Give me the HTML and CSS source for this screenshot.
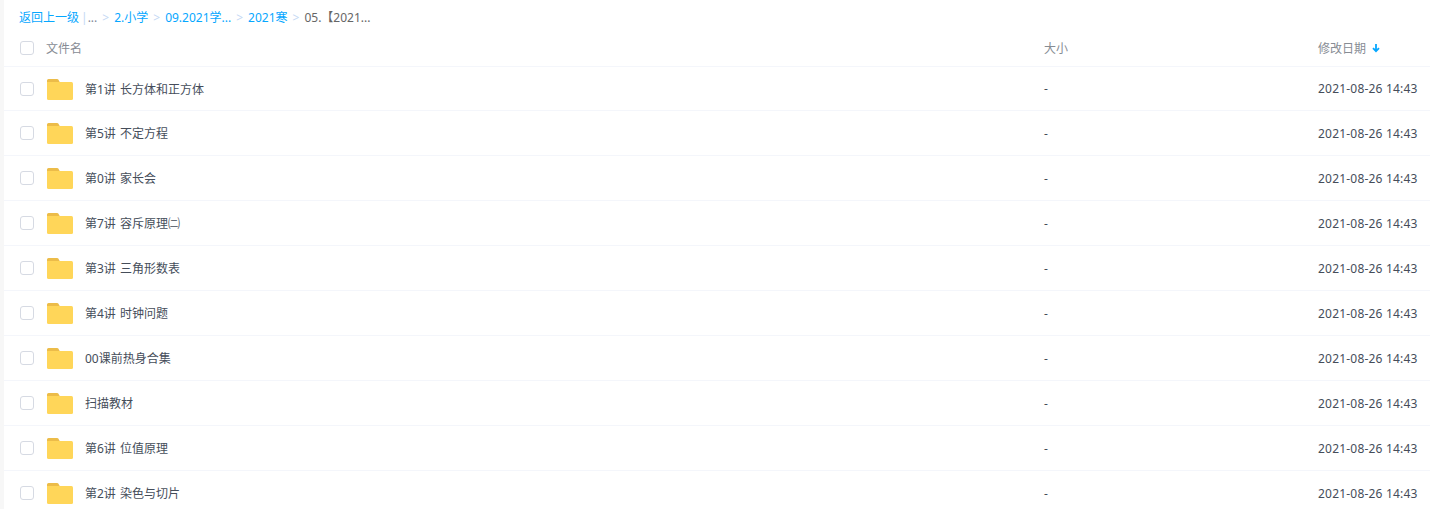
FILE: index.html
```html
<!DOCTYPE html>
<html lang="zh-CN">
<head>
<meta charset="utf-8">
<title>文件列表</title>
<link rel="stylesheet" href="styles.css">
</head>
<body>
<div class="page">
  <nav class="crumbs">
    <a>返回上一级</a><span class="bar">|</span><a class="dots">...</a>
    <span class="sep">&gt;</span><a>2.小学</a>
    <span class="sep">&gt;</span><a>09.2021学...</a>
    <span class="sep">&gt;</span><a>2021寒</a>
    <span class="sep">&gt;</span><span class="current">05.【2021...</span>
  </nav>
  <div class="row head">
    <span class="check"></span>
    <span class="name">文件名</span>
    <span class="size">大小</span>
    <span class="date">修改日期<svg class="arrow" width="10" height="10" viewBox="0 0 10 10"><path d="M5 1v7M2 5.2 5 8.2 8 5.2" fill="none" stroke="#06a7ff" stroke-width="1.8"/></svg></span>
  </div>
  <div class="row"><span class="check"></span><svg class="folder" viewBox="0 0 26 21"><path d="M1.5 0h8.7a1.5 1.5 0 0 1 1.1.5L13 3.5H0v-2A1.5 1.5 0 0 1 1.5 0z" fill="#ecbc49"/><path d="M0 3h24.5A1.5 1.5 0 0 1 26 4.500V19.500a1.500 1.500 0 0 1-1.500 1.500H1.500A1.500 1.500 0 0 1 0 19.500z" fill="#ffd659"/></svg><span class="title">第1讲 长方体和正方体</span><span class="size">-</span><span class="date stamp">2021-08-26 14:43</span></div>
  <div class="row"><span class="check"></span><svg class="folder" viewBox="0 0 26 21"><path d="M1.5 0h8.7a1.5 1.5 0 0 1 1.1.5L13 3.5H0v-2A1.5 1.5 0 0 1 1.5 0z" fill="#ecbc49"/><path d="M0 3h24.5A1.5 1.5 0 0 1 26 4.500V19.500a1.500 1.500 0 0 1-1.500 1.500H1.500A1.500 1.500 0 0 1 0 19.500z" fill="#ffd659"/></svg><span class="title">第5讲 不定方程</span><span class="size">-</span><span class="date stamp">2021-08-26 14:43</span></div>
  <div class="row"><span class="check"></span><svg class="folder" viewBox="0 0 26 21"><path d="M1.5 0h8.7a1.5 1.5 0 0 1 1.1.5L13 3.5H0v-2A1.5 1.5 0 0 1 1.5 0z" fill="#ecbc49"/><path d="M0 3h24.5A1.5 1.5 0 0 1 26 4.500V19.500a1.500 1.500 0 0 1-1.500 1.500H1.500A1.500 1.500 0 0 1 0 19.500z" fill="#ffd659"/></svg><span class="title">第0讲 家长会</span><span class="size">-</span><span class="date stamp">2021-08-26 14:43</span></div>
  <div class="row"><span class="check"></span><svg class="folder" viewBox="0 0 26 21"><path d="M1.5 0h8.7a1.5 1.5 0 0 1 1.1.5L13 3.5H0v-2A1.5 1.5 0 0 1 1.5 0z" fill="#ecbc49"/><path d="M0 3h24.5A1.5 1.5 0 0 1 26 4.500V19.500a1.500 1.500 0 0 1-1.500 1.500H1.500A1.500 1.500 0 0 1 0 19.500z" fill="#ffd659"/></svg><span class="title">第7讲 容斥原理㈡</span><span class="size">-</span><span class="date stamp">2021-08-26 14:43</span></div>
  <div class="row"><span class="check"></span><svg class="folder" viewBox="0 0 26 21"><path d="M1.5 0h8.7a1.5 1.5 0 0 1 1.1.5L13 3.5H0v-2A1.5 1.5 0 0 1 1.5 0z" fill="#ecbc49"/><path d="M0 3h24.5A1.5 1.5 0 0 1 26 4.500V19.500a1.500 1.500 0 0 1-1.500 1.500H1.500A1.500 1.500 0 0 1 0 19.500z" fill="#ffd659"/></svg><span class="title">第3讲 三角形数表</span><span class="size">-</span><span class="date stamp">2021-08-26 14:43</span></div>
  <div class="row"><span class="check"></span><svg class="folder" viewBox="0 0 26 21"><path d="M1.5 0h8.7a1.5 1.5 0 0 1 1.1.5L13 3.5H0v-2A1.5 1.5 0 0 1 1.5 0z" fill="#ecbc49"/><path d="M0 3h24.5A1.5 1.5 0 0 1 26 4.500V19.500a1.500 1.500 0 0 1-1.500 1.500H1.500A1.500 1.500 0 0 1 0 19.500z" fill="#ffd659"/></svg><span class="title">第4讲 时钟问题</span><span class="size">-</span><span class="date stamp">2021-08-26 14:43</span></div>
  <div class="row"><span class="check"></span><svg class="folder" viewBox="0 0 26 21"><path d="M1.5 0h8.7a1.5 1.5 0 0 1 1.1.5L13 3.5H0v-2A1.5 1.5 0 0 1 1.5 0z" fill="#ecbc49"/><path d="M0 3h24.5A1.5 1.5 0 0 1 26 4.500V19.500a1.500 1.500 0 0 1-1.500 1.500H1.500A1.500 1.500 0 0 1 0 19.500z" fill="#ffd659"/></svg><span class="title">00课前热身合集</span><span class="size">-</span><span class="date stamp">2021-08-26 14:43</span></div>
  <div class="row"><span class="check"></span><svg class="folder" viewBox="0 0 26 21"><path d="M1.5 0h8.7a1.5 1.5 0 0 1 1.1.5L13 3.5H0v-2A1.5 1.5 0 0 1 1.5 0z" fill="#ecbc49"/><path d="M0 3h24.5A1.5 1.5 0 0 1 26 4.500V19.500a1.500 1.500 0 0 1-1.500 1.500H1.500A1.500 1.500 0 0 1 0 19.500z" fill="#ffd659"/></svg><span class="title">扫描教材</span><span class="size">-</span><span class="date stamp">2021-08-26 14:43</span></div>
  <div class="row"><span class="check"></span><svg class="folder" viewBox="0 0 26 21"><path d="M1.5 0h8.7a1.5 1.5 0 0 1 1.1.5L13 3.5H0v-2A1.5 1.5 0 0 1 1.5 0z" fill="#ecbc49"/><path d="M0 3h24.5A1.5 1.5 0 0 1 26 4.500V19.500a1.500 1.500 0 0 1-1.500 1.500H1.500A1.500 1.500 0 0 1 0 19.500z" fill="#ffd659"/></svg><span class="title">第6讲 位值原理</span><span class="size">-</span><span class="date stamp">2021-08-26 14:43</span></div>
  <div class="row"><span class="check"></span><svg class="folder" viewBox="0 0 26 21"><path d="M1.5 0h8.7a1.5 1.5 0 0 1 1.1.5L13 3.5H0v-2A1.5 1.5 0 0 1 1.5 0z" fill="#ecbc49"/><path d="M0 3h24.5A1.5 1.5 0 0 1 26 4.500V19.500a1.500 1.500 0 0 1-1.500 1.500H1.500A1.500 1.500 0 0 1 0 19.500z" fill="#ffd659"/></svg><span class="title">第2讲 染色与切片</span><span class="size">-</span><span class="date stamp">2021-08-26 14:43</span></div>
</div>
</body>
</html>
```
FILE: styles.css
```css
* { box-sizing: border-box; }
html, body { margin: 0; height: 100%; overflow: hidden; background: #f7f7f7; }
body {
  font-family: "Noto Sans", "Noto Sans CJK SC", sans-serif;
  font-size: 12px;
  color: #454d5a;
}
.page { margin-left: 4px; height: 509px; overflow: hidden; background: #fff; }
.crumbs {
  height: 34px;
  display: flex;
  align-items: center;
  padding-left: 15px;
  white-space: nowrap;
  color: #06a7ff;
}
.bar { color: #c4d8f4; margin: 0 0 0 2px; }
.dots { color: #818999; }
.sep { color: #c4d8f4; margin: 0 5px 0 5px; }
.current { color: #666; }
.row {
  height: 45px;
  display: flex;
  align-items: center;
  border-bottom: 1px solid #f4f6fb;
  padding-left: 16px;
}
.head { height: 33px; color: #878c94; padding-bottom: 4px; }
.head + .row { height: 44px; }
.check {
  width: 14px;
  height: 14px;
  border: 1px solid #d6dae3;
  border-radius: 3px;
  flex: none;
}
.folder { width: 26px; height: 21px; margin: 1px 0 0 13px; flex: none; }
.title { margin-left: 12px; width: 959px; flex: none; word-spacing: 1px; }
.name { margin-left: 12px; width: 998px; flex: none; }
.size { width: 274px; flex: none; }
.date { white-space: nowrap; display: flex; align-items: center; }
.stamp { letter-spacing: 0.2px; }
.arrow { margin-left: 5px; }
```
